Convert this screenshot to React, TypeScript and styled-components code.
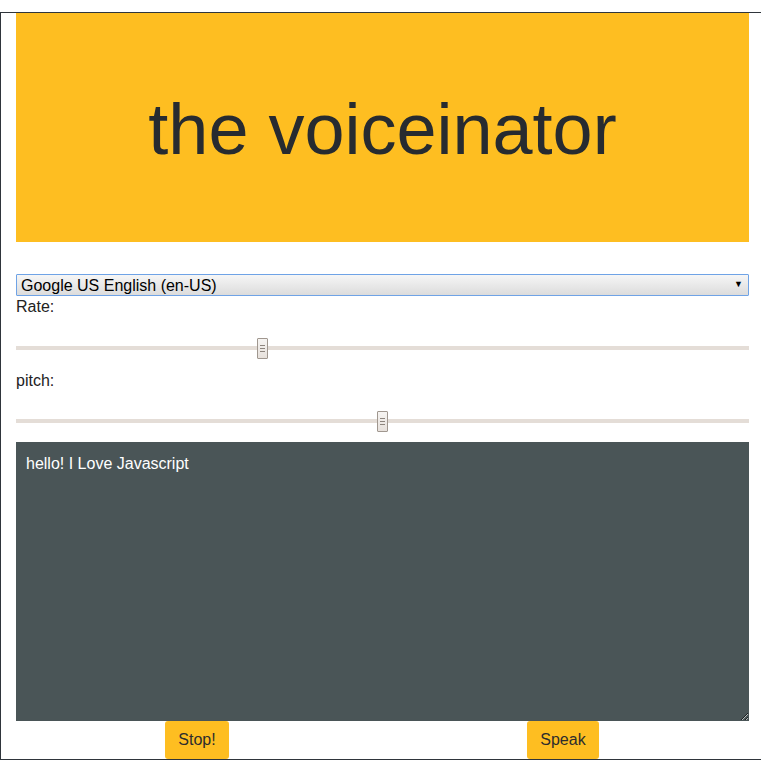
import React from "react";
import styled, { createGlobalStyle } from "styled-components";

const Global = createGlobalStyle`
  html, body { margin: 0; padding: 0; overflow: hidden; background: #fff; }
  body { font-family: "Liberation Sans", Arial, sans-serif; font-size: 16px; color: #222; }
  * { box-sizing: border-box; }
`;

const Voiceinator = styled.div`
  margin-top: 12px;
  width: 765px;
  border: 1px solid #2f353b;
  padding: 0 15px;
  display: flex;
  flex-direction: column;
`;

const Header = styled.h1`
  margin: 0;
  height: 229px;
  background: #febe21;
  color: #272b30;
  font-weight: 400;
  font-size: 72px;
  display: flex;
  align-items: center;
  justify-content: center;
  padding-top: 3px;
`;

const SelectWrap = styled.div`
  position: relative;
  margin-top: 32px;
`;

const Select = styled.select`
  appearance: none;
  -webkit-appearance: none;
  display: block;
  width: 100%;
  height: 22px;
  margin: 0;
  padding: 0 20px 0 4px;
  border: 1px solid #6fa3e6;
  border-radius: 1px;
  background: linear-gradient(#f6f6f6, #dcdcdc);
  font-family: "Liberation Sans", Arial, sans-serif;
  font-size: 16px;
  color: #000;
  outline: none;
`;

const Arrow = styled.span`
  position: absolute;
  right: 6px;
  top: 5px;
  font-size: 9px;
  line-height: 10px;
  color: #000;
  pointer-events: none;
`;

const Label = styled.label<{ $gap: number }>`
  display: block;
  margin-top: ${(p) => p.$gap}px;
  line-height: 18px;
  color: #222;
`;

const Range = styled.input<{ $gap: number }>`
  -webkit-appearance: none;
  appearance: none;
  display: block;
  width: 100%;
  height: 21px;
  margin: ${(p) => p.$gap}px 0 0;
  padding: 0;
  background: transparent;
  &::-webkit-slider-runnable-track {
    height: 4px;
    background: #e4ddd7;
    border: none;
  }
  &::-webkit-slider-thumb {
    -webkit-appearance: none;
    box-sizing: border-box;
    width: 11px;
    height: 21px;
    margin-top: -8px;
    border: 1px solid #a0978f;
    border-radius: 1px;
    background:
      linear-gradient(#8d857e, #8d857e) 2px 6px / 5px 1px no-repeat,
      linear-gradient(#8d857e, #8d857e) 2px 9px / 5px 1px no-repeat,
      linear-gradient(#8d857e, #8d857e) 2px 12px / 5px 1px no-repeat,
      linear-gradient(#f6f4f2, #e7e1dc);
  }
`;

const TextArea = styled.textarea`
  display: block;
  width: 100%;
  height: 279px;
  margin: 11px 0 0;
  padding: 13px 10px 10px;
  border: none;
  background: #4a5557;
  color: #fff;
  font-family: "Liberation Sans", Arial, sans-serif;
  font-size: 16px;
  outline: none;
`;

const Buttons = styled.div`
  display: flex;
  justify-content: space-around;
  padding-right: 1px;
`;

const Button = styled.button`
  height: 38px;
  padding: 0 13px;
  border: none;
  border-radius: 3px;
  background: #febe21;
  color: #2d2d2d;
  font-family: "Liberation Sans", Arial, sans-serif;
  font-size: 16px;
`;

export default function App() {
  return (
    <>
      <Global />
      <Voiceinator>
        <Header>the voiceinator</Header>
        <SelectWrap>
          <Select name="voice" defaultValue="g">
            <option value="g">Google US English (en-US)</option>
          </Select>
          <Arrow>▼</Arrow>
        </SelectWrap>
        <Label $gap={2} htmlFor="rate">Rate:</Label>
        <Range $gap={21} id="rate" type="range" name="rate" min="0" max="3" defaultValue="1" step="0.1" />
        <Label $gap={14} htmlFor="pitch">pitch:</Label>
        <Range $gap={20} id="pitch" type="range" name="pitch" min="0" max="2" defaultValue="1" step="0.1" />
        <TextArea name="text" defaultValue="hello! I Love Javascript" />
        <Buttons>
          <Button id="stop">Stop!</Button>
          <Button id="speak">Speak</Button>
        </Buttons>
      </Voiceinator>
    </>
  );
}
